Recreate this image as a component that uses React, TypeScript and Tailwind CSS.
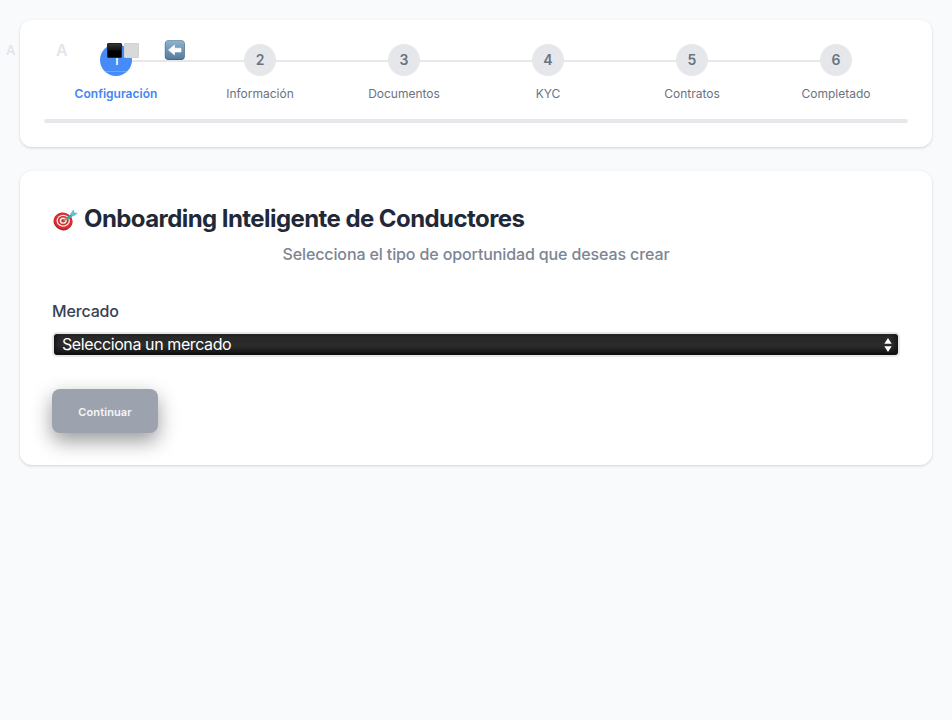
import React from "react";

const steps = ["Configuración", "Información", "Documentos", "KYC", "Contratos", "Completado"];

function BackIcon() {
  return (
    <svg width="22" height="22" viewBox="0 0 22 22" className="ml-[25px] shrink-0">
      <defs>
        <linearGradient id="back" x1="0" y1="0" x2="0" y2="1">
          <stop offset="0" stopColor="#8db3cf" />
          <stop offset="1" stopColor="#587c9c" />
        </linearGradient>
      </defs>
      <rect x="0.8" y="1.2" width="20" height="19.8" rx="3.8" fill="#49677f" />
      <rect x="1.4" y="1.6" width="18.8" height="18.4" rx="3.2" fill="url(#back)" />
      <path d="M4.5 11 L10.5 6 V9.2 H17 V13 H10.5 V16 Z" fill="#fff" stroke="#fff" strokeWidth="0.6" strokeLinejoin="round" />
    </svg>
  );
}

function TargetIcon() {
  return (
    <svg width="26" height="24" viewBox="0 0 26 24" className="mt-[2px] shrink-0">
      <ellipse cx="11" cy="13.6" rx="9.5" ry="8.7" transform="rotate(18 11 13.6)" fill="#a91f25" />
      <ellipse cx="11.2" cy="12.8" rx="9.2" ry="8.2" transform="rotate(18 11.2 12.8)" fill="#d92d30" />
      <ellipse cx="11.2" cy="12.7" rx="6.7" ry="6" fill="#f4e9e6" />
      <ellipse cx="11.2" cy="12.7" rx="5.4" ry="4.8" fill="#cf2c31" />
      <ellipse cx="11.2" cy="12.7" rx="3.6" ry="3.1" fill="#f4e9e6" />
      <ellipse cx="11.2" cy="12.7" rx="2" ry="1.7" fill="#cf2c31" />
      <path d="M11.5 12.6 L16.5 9.6" stroke="#b98a67" strokeWidth="1.8" />
      <path d="M15.5 10.5 L21.5 5.5" stroke="#3aa4ac" strokeWidth="2.8" />
      <path d="M17.8 6.6 L21.6 1.2 L22.4 4.4 L26 5 L21.4 8.6 Z" fill="#5cc6cc" />
    </svg>
  );
}

export default function App() {
  return (
    <main className="flex min-h-screen flex-col gap-6 bg-[#f9fafc] p-5 font-['Inter',sans-serif]">
      <section className="relative h-[127px] rounded-xl bg-white p-6 shadow-[0_1px_3px_rgba(0,0,0,0.16)]">
        <div className="relative grid grid-cols-6">
          <div className="absolute inset-x-[8.333%] top-4 h-[2px] bg-[#e5e7eb]" />
          {steps.map((step, i) => (
            <div key={step} className="relative flex flex-col items-center gap-2">
              <div
                className={
                  i === 0
                    ? "flex size-8 items-center justify-center overflow-hidden rounded-full bg-[#478bf8] bg-linear-to-b from-transparent from-84% via-[#71a5fa] via-86% to-transparent to-88% text-sm font-medium text-white"
                    : "flex size-8 items-center justify-center rounded-full bg-[#e5e7eb] text-sm font-semibold text-[#6b7280]"
                }
              >
                {i + 1}
              </div>
              <span
                className={
                  i === 0
                    ? "text-xs font-semibold leading-[19px] tracking-[0.02px] text-[#4285f4]"
                    : "text-xs leading-[19px] text-[#6b7280]"
                }
              >
                {step}
              </span>
            </div>
          ))}
        </div>
        <div className="mt-4 h-1 rounded-full bg-[#e5e7eb]" />

        <div className="absolute -left-3.5 top-[19px] flex h-[22px] items-center font-semibold text-[#e1e6ee]">
          <span className="w-[50px] pt-[2px] text-[13px]">A</span>
          <span className="w-[51px] text-base">A</span>
          <div className="size-[15px] rounded-[1px] border border-[#242424] bg-linear-to-b from-[#363636] via-[#141414] via-45% to-black to-60%" />
          <div className="ml-[2px] size-[15px] rounded-[1px] border border-[#d2d2d2] bg-[#d9d9d9]" />
          <BackIcon />
        </div>
      </section>

      <section className="h-[294px] rounded-xl bg-white p-8 shadow-[0_1px_3px_rgba(0,0,0,0.16)]">
        <h1 className="flex h-8 items-center gap-1.5 text-2xl font-bold tracking-[-0.57px] text-[#1f2937]">
          <TargetIcon />
          <span>Onboarding Inteligente de Conductores</span>
        </h1>
        <p className="mt-[7px] text-center text-base font-medium leading-6 tracking-[-0.12px] text-[#7c8594]">
          Selecciona el tipo de oportunidad que deseas crear
        </p>
        <label className="mt-[33px] block text-base font-medium leading-6 tracking-[-0.15px] text-[#374151]">Mercado</label>
        <button className="mt-[9px] flex h-[25px] w-full items-center justify-between rounded-[5px] border-2 border-[#e5e7eb] bg-linear-to-b from-[#292929] from-35% via-[#2c2c2c] via-55% to-[#111] pl-2 pr-[6px] text-base leading-[19px] tracking-[-0.4px] text-white shadow-[inset_4px_0_4px_-2px_#111,inset_-4px_0_4px_-2px_#111]">
          <span>Selecciona un mercado</span>
          <svg width="8" height="16" viewBox="0 0 8 16" fill="#fff">
            <path d="M4 1 L7.7 6.8 H0.3 Z M0.3 9.3 H7.7 L4 15 Z" />
          </svg>
        </button>
        <button className="mt-8 flex h-11 w-[106px] items-center justify-center rounded-lg bg-[#9ca3af] pt-[2px] text-[11px] font-semibold tracking-[0.12px] text-white/90 shadow-[0_8px_20px_rgba(0,0,0,0.4)]">
          Continuar
        </button>
      </section>
    </main>
  );
}
